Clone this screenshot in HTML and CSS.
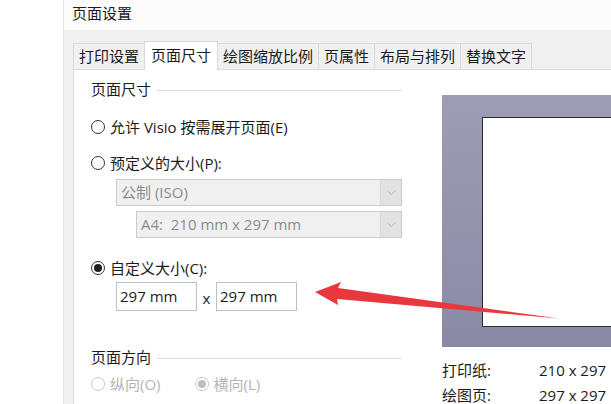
FILE: index.html
```html
<!DOCTYPE html>
<html lang="zh-CN">
<head>
    <meta charset="UTF-8">
    <title>页面设置</title>
    <link rel="stylesheet" href="styles.css">
</head>
<body>
<div class="dialog">
    <div class="titlebar">页面设置</div>
    <div class="dialog-body">
        <ul class="tabs">
            <li class="tab">打印设置</li>
            <li class="tab active">页面尺寸</li>
            <li class="tab">绘图缩放比例</li>
            <li class="tab">页属性</li>
            <li class="tab">布局与排列</li>
            <li class="tab">替换文字</li>
        </ul>
        <div class="panel">
            <div class="left">
                <div class="group-title"><span>页面尺寸</span><i class="rule"></i></div>

                <label class="radio r-first"><span class="dot"></span>允许 Visio 按需展开页面(E)</label>
                <label class="radio r-second"><span class="dot"></span>预定义的大小(P):</label>

                <div class="select sel-1">
                    <span class="sel-text">公制 (ISO)</span>
                    <span class="sel-btn">
                        <svg width="9" height="5" viewBox="0 0 9 5"><path d="M0.5 0.5 L4.5 4.5 L8.5 0.5" fill="none" stroke="#b4b4b4" stroke-width="1"/></svg>
                    </span>
                </div>
                <div class="select sel-2">
                    <span class="sel-text">A4:&nbsp; 210 mm x 297 mm</span>
                    <span class="sel-btn">
                        <svg width="9" height="5" viewBox="0 0 9 5"><path d="M0.5 0.5 L4.5 4.5 L8.5 0.5" fill="none" stroke="#b4b4b4" stroke-width="1"/></svg>
                    </span>
                </div>

                <label class="radio r-third"><span class="dot checked"></span>自定义大小(C):</label>
                <div class="size-row">
                    <div class="field">297 mm</div>
                    <span class="times">x</span>
                    <div class="field">297 mm</div>
                </div>

                <div class="group-title g-second"><span>页面方向</span><i class="rule"></i></div>
                <div class="orient">
                    <label class="radio disabled"><span class="dot"></span>纵向(O)</label>
                    <label class="radio disabled"><span class="dot checked"></span>横向(L)</label>
                </div>
            </div>

            <div class="right">
                <div class="preview">
                    <div class="paper"></div>
                </div>
                <div class="info">
                    <div class="info-row"><span class="info-key">打印纸:</span><span>210 x 297</span></div>
                    <div class="info-row"><span class="info-key">绘图页:</span><span>297 x 297</span></div>
                </div>
            </div>
        </div>
    </div>
</div>

<!-- 红色标注箭头 -->
<svg class="arrow" width="611" height="404" viewBox="0 0 611 404">
    <polygon points="315,292 341,282 338,288 559,318.5 337,299 338,305" fill="#e8383d"/>
</svg>
</body>
</html>
```

FILE: styles.css
```css
html, body {
    margin: 0;
    padding: 0;
}

body {
    width: 611px;
    height: 404px;
    overflow: hidden;
    background: #fff;
    font-family: "Open Sans", "Noto Sans CJK SC", sans-serif;
    font-size: 15px;
    color: #1b1b1b;
    position: relative;
}

.dialog {
    margin-left: 63px;
    height: 404px;
    background: #f0f0f0;
    border-left: 1px solid #e4e4e4;
}

.titlebar {
    height: 30px;
    line-height: 26px;
    padding-left: 8px;
    background: #fcfcfc;
}

.dialog-body {
    padding: 11px 0 0 9px;
}

/* 选项卡 */
.tabs {
    list-style: none;
    margin: 0;
    padding: 0;
    display: flex;
    align-items: flex-end;
    height: 28px;
}

.tab {
    height: 25px;
    line-height: 24px;
    padding: 0 5px;
    border: 1px solid #d9d9d9;
    border-bottom: none;
    margin-right: -1px;
    background: #f0f0f0;
    white-space: nowrap;
}

.tab.active {
    height: 28px;
    line-height: 26px;
    padding: 0 6px;
    background: #fff;
    position: relative;
    z-index: 1;
    margin-bottom: -1px;
}

.panel {
    display: flex;
    background: #fff;
    border-top: 1px solid #d9d9d9;
    border-left: 1px solid #d9d9d9;
    height: 334px;
}

.left {
    width: 311px;
    padding: 9px 0 0 17px;
    flex-shrink: 0;
}

.group-title {
    display: flex;
    align-items: center;
    height: 20px;
    line-height: 20px;
}

.group-title .rule {
    flex: 1;
    height: 1px;
    background: #dcdcdc;
    margin-left: 6px;
    margin-top: 2px;
}

.g-second {
    margin-top: 36px;
}

/* 单选框 */
.radio {
    display: flex;
    align-items: center;
    height: 20px;
    line-height: 20px;
    white-space: nowrap;
}

.dot {
    width: 12px;
    height: 12px;
    border: 1px solid #333;
    border-radius: 50%;
    margin: 0 5px 0 0;
    display: flex;
    align-items: center;
    justify-content: center;
    flex-shrink: 0;
}

.dot.checked::after {
    content: "";
    width: 8px;
    height: 8px;
    border-radius: 50%;
    background: #1f1f1f;
}

.r-first {
    margin-top: 18px;
}

.r-second {
    margin-top: 16px;
}

.r-third {
    margin-top: 20px;
}

.radio.disabled {
    color: #b4b4b4;
}

.radio.disabled .dot {
    border-color: #c8c8c8;
}

.radio.disabled .dot.checked::after {
    background: #bdbdbd;
}

.orient {
    display: flex;
    gap: 34px;
    margin-top: 7px;
}

/* 下拉框(禁用) */
.select {
    display: flex;
    height: 25px;
    border: 1px solid #c9cdd2;
    background: #f0f0f0;
    color: #8c8c8c;
}

.sel-1 {
    margin: 6px 0 0 25px;
}

.sel-2 {
    margin: 5px 0 0 45px;
}

.sel-text {
    flex: 1;
    line-height: 25px;
    padding-left: 4px;
}

.sel-btn {
    width: 20px;
    border-left: 1px solid #d6d6d6;
    background: #e2e2e2;
    display: flex;
    align-items: center;
    justify-content: center;
}

/* 自定义尺寸 */
.size-row {
    display: flex;
    align-items: center;
    margin: 4px 0 0 25px;
    height: 29px;
}

.field {
    width: 76px;
    height: 27px;
    line-height: 26px;
    padding-left: 3px;
    border: 1px solid #b4c4cc;
    background: #fff;
}

.times {
    width: 19px;
    text-align: center;
    padding-top: 3px;
}

/* 预览 */
.right {
    margin-left: 40px;
    padding-top: 25px;
    flex: 1;
    min-width: 0;
}

.preview {
    height: 252px;
    background: linear-gradient(#9d9db3, #8a8aa6);
    padding: 22px 0 0 40px;
    box-sizing: border-box;
}

.paper {
    height: 208px;
    background: #fff;
    border: 1px solid #2b2b33;
    border-right: none;
}

.info {
    margin-top: 13px;
    display: flex;
    flex-direction: column;
    gap: 5px;
}

.info-row {
    display: flex;
    line-height: 20px;
    white-space: nowrap;
}

.info-key {
    width: 97px;
}

.arrow {
    position: absolute;
    left: 0;
    top: 0;
    pointer-events: none;
}
```
